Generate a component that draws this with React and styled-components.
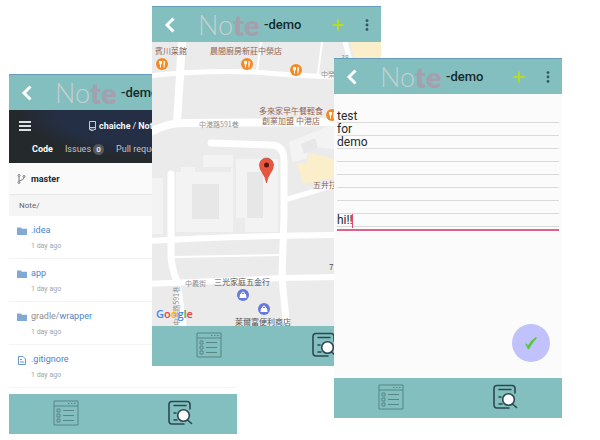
import React from "react";
import styled, { createGlobalStyle, css } from "styled-components";

const GlobalStyle = createGlobalStyle`
  * { box-sizing: border-box; }
  body { margin: 0; background: #ffffff; font-family: Roboto, "Noto Sans CJK TC", sans-serif; }
  button { margin: 0; padding: 0; border: 0; background: none; font: inherit; color: inherit; }
  a { color: inherit; text-decoration: none; }
  svg { display: block; }
  ul { list-style: none; margin: 0; padding: 0; }
`;

/* Three overlapping screens share one row of proportional columns. */
const Stage = styled.main`
  display: grid;
  grid-template-columns:
    minmax(0, 143fr) minmax(0, 85fr) minmax(0, 97fr)
    minmax(0, 47fr) minmax(0, 181fr) minmax(0, 38fr);
  align-items: start;
  padding-left: 9px;
`;

const Phone = styled.section`
  isolation: isolate;
  grid-row: 1;
  grid-column: ${(p) => p.$columns};
  margin-top: ${(p) => p.$top}px;
  min-height: 360px;
  display: flex;
  flex-direction: column;
  overflow: hidden;
  background: ${(p) => p.$background || "#ffffff"};
`;

const Bar = styled.header`
  flex: none;
  height: 36px;
  display: flex;
  align-items: center;
  padding-left: 12px;
  overflow: hidden;
  background: #82bfbe;
  border-top: 1px solid #659cbc;
`;

const IconButton = styled.button`
  flex: none;
  width: ${(p) => p.$width}px;
  height: 24px;
  display: flex;
  align-items: center;
  justify-content: center;
`;

const Brand = styled.h1`
  flex: 1;
  display: flex;
  align-items: center;
  gap: 4px;
  margin: 0 0 0 22px;
  line-height: 34px;
  white-space: nowrap;
`;

const Wordmark = styled.span`
  display: flex;
  width: 62px;
  color: #c6d0d0;
  font-family: Lato, sans-serif;
  font-size: 27px;
  font-weight: 300;
`;

const WordmarkHeavy = styled.span`
  color: #a5a0ae;
  font-family: Lato, sans-serif;
  font-size: 29px;
  font-weight: 800;
`;

const Suffix = styled.span`
  color: #142a2c;
  font-size: 13px;
  font-weight: 500;
`;

const TabBar = styled.nav`
  flex: none;
  height: 40px;
  display: grid;
  grid-template-columns: 1fr 1fr;
  background: #82bfbe;
`;

const Tab = styled.button`
  display: flex;
  align-items: center;
  justify-content: center;
  padding-bottom: 3px;
`;

function AppBar() {
  return (
    <Bar>
      <IconButton $width={12} aria-label="Back">
        <svg width="12" height="16" viewBox="0 0 12 16" fill="none" stroke="#fff" strokeWidth="3">
          <path d="M9.5 1.5 3 8l6.5 6.5" />
        </svg>
      </IconButton>
      <Brand>
        <Wordmark>
          No<WordmarkHeavy>te</WordmarkHeavy>
        </Wordmark>
        <Suffix>-demo</Suffix>
      </Brand>
      <IconButton $width={30} aria-label="Add">
        <svg width="12" height="12" viewBox="0 0 12 12" stroke="#b5dc24" strokeWidth="2">
          <path d="M6 .5v11M.5 6h11" />
        </svg>
      </IconButton>
      <IconButton $width={28} aria-label="More options">
        <svg width="4" height="12" viewBox="0 0 4 12" fill="#31585a">
          <circle cx="2" cy="1.6" r="1.4" />
          <circle cx="2" cy="6" r="1.4" />
          <circle cx="2" cy="10.4" r="1.4" />
        </svg>
      </IconButton>
    </Bar>
  );
}

function BottomTabs() {
  return (
    <TabBar>
      <Tab aria-label="List">
        <svg width="26" height="26" viewBox="0 0 26 26" fill="none" stroke="#578685">
          <path d="M1 1h24v24H1zM1 6h24" />
          <path d="M15 3.5h1.5M18 3.5h1.5M21 3.5h1.5" />
          <path d="M4 9h3v3H4zM4 14h3v3H4zM4 19h3v3H4zM10 10.5h11M10 15.5h11M10 20.5h11" />
        </svg>
      </Tab>
      <Tab aria-label="Search">
        <svg width="26" height="26" viewBox="0 0 26 26" fill="none" stroke="#2d4850" strokeWidth="1.6" strokeLinecap="round">
          <path d="M23 9V4.5Q23 1.500 20 1.500H5Q2 1.500 2 4.500v16Q2 24 5 24h12" />
          <path d="M7 5.5h12M7 13h2M7 20h3M20.5 20l4 3.5" />
          <circle cx="16.5" cy="15.5" r="5.8" fill="#fff" />
        </svg>
      </Tab>
    </TabBar>
  );
}

/* ---------- repository browser ---------- */

const RepoHead = styled.div`
  height: 53px;
  color: #f4f6f8;
  background: radial-gradient(ellipse 170px 60px at 65% 0, #242f45 0 60%, #24292c 82%);
  font-size: 9px;
  line-height: 12px;
  white-space: nowrap;
`;

const RepoTitle = styled.div`
  display: flex;
  align-items: center;
  height: 32px;
  padding: 0 10px;
  font-weight: 700;
`;

const RepoName = styled.span`
  display: flex;
  align-items: center;
  gap: 2px;
  margin-left: 57px;
`;

const Slash = styled.span`
  font-weight: 400;
`;

const RepoTabs = styled.div`
  display: flex;
  align-items: center;
  gap: 12px;
  padding: 1px 0 0 23px;
`;

const RepoTab = styled.a`
  display: flex;
  align-items: center;
  gap: 2px;
  color: #c0c4c8;
  ${(p) => p.$active && css`
    color: #ffffff;
    font-weight: 700;
  `}
`;

const Count = styled.span`
  width: 11px;
  height: 11px;
  border-radius: 6px;
  background: #54595f;
  color: #e4e6e8;
  font-size: 8px;
  font-weight: 700;
  line-height: 11px;
  text-align: center;
`;

const BranchRow = styled.div`
  display: flex;
  align-items: center;
  gap: 5px;
  height: 32px;
  padding-left: 8px;
  background: #fafafa;
  border-bottom: 1px solid #e8e8e8;
  color: #25292d;
  font-size: 9px;
  font-weight: 700;
`;

const PathRow = styled.div`
  height: 21px;
  padding-left: 10px;
  background: #f5f5f5;
  color: #606469;
  font-size: 8px;
  line-height: 21px;
`;

const FileItem = styled.li`
  display: grid;
  grid-template-columns: 10px 1fr;
  column-gap: 4px;
  height: 43px;
  padding: 8px 8px 0;
  border-bottom: 1px solid #f4f4f4;
`;

const FileText = styled.div`
  display: flex;
  flex-direction: column;
  gap: 4px;
`;

const FileLink = styled.a`
  color: #4a84c6;
  font-size: 9px;
  line-height: 13px;
`;

const Muted = styled.span`
  color: #8c8f93;
`;

const FileAge = styled.time`
  color: #a2a4a6;
  font-size: 7px;
  line-height: 11px;
`;

const Spacer = styled.div`
  flex: 1;
`;

const files = [
  { name: ".idea", folder: true },
  { name: "app", folder: true },
  { parent: "gradle/", name: "wrapper", folder: true },
  { name: ".gitignore", folder: false },
];

function FolderIcon() {
  return (
    <svg width="10" height="15" viewBox="0 0 10 15" fill="#82a9d4">
      <path d="M0 3.500h4l1 1.200h5V11H0z" />
    </svg>
  );
}

function FileIcon() {
  return (
    <svg width="10" height="15" viewBox="0 0 10 15" fill="none" stroke="#6b96cc">
      <path d="M1.500 3.500h4.500l2.500 2.500v5.500h-7zM3 6.500h2M3 9h4" />
    </svg>
  );
}

function RepoScreen() {
  return (
    <Phone $columns="1 / 3" $top={74}>
      <AppBar />
      <RepoHead>
        <RepoTitle>
          <IconButton $width={12} aria-label="Menu">
            <svg width="12" height="10" viewBox="0 0 12 10" stroke="#dde1e6" strokeWidth="2">
              <path d="M0 1h12M0 5h12M0 9h12" />
            </svg>
          </IconButton>
          <RepoName>
            <svg width="9" height="10" viewBox="0 0 9 10" fill="none" stroke="#c7ccd4">
              <path d="M3 8.500H1.500v-8h6v8H6M1.500 6.500h6M3 7.500V10l1-.8 1 .8V7.500" />
            </svg>
            <a href="#owner">chaiche</a> <Slash>/</Slash> <a href="#note">Note</a>
          </RepoName>
        </RepoTitle>
        <RepoTabs>
          <RepoTab href="#code" $active>Code</RepoTab>
          <RepoTab href="#issues">Issues <Count>0</Count></RepoTab>
          <RepoTab href="#pulls">Pull requests</RepoTab>
        </RepoTabs>
      </RepoHead>
      <BranchRow>
        <svg width="9" height="10" viewBox="0 0 9 10" fill="none" stroke="#777b80">
          <circle cx="2" cy="1.5" r="1" />
          <circle cx="2" cy="8.5" r="1" />
          <circle cx="7" cy="2.5" r="1" />
          <path d="M2 2.5v5M7 3.5Q7 6 2 7" />
        </svg>
        master
      </BranchRow>
      <PathRow>Note/</PathRow>
      <ul>
        {files.map((file) => (
          <FileItem key={file.name}>
            {file.folder ? <FolderIcon /> : <FileIcon />}
            <FileText>
              <FileLink href="#file">
                {file.parent && <Muted>{file.parent}</Muted>}
                {file.name}
              </FileLink>
              <FileAge>1 day ago</FileAge>
            </FileText>
          </FileItem>
        ))}
      </ul>
      <Spacer />
      <BottomTabs />
    </Phone>
  );
}

/* ---------- map ---------- */

const MapArea = styled.div`
  position: relative;
  flex: 1;
  min-height: 284px;
  overflow: hidden;
  background: #ebebeb;
`;

const MapDrawing = styled.svg`
  width: 100%;
  height: 284px;
`;

const tones = { food: "#8d6355", road: "#8f8f8f", shop: "#555555" };

const MapLabel = styled.span`
  position: absolute;
  left: ${(p) => p.$x}px;
  top: ${(p) => p.$y}px;
  color: ${(p) => tones[p.$tone]};
  font-family: "Noto Sans CJK TC", sans-serif;
  font-size: ${(p) => (p.$tone === "road" ? 7 : 8)}px;
  line-height: 10px;
  text-align: center;
  white-space: pre;
  ${(p) => p.$upward && css`
    writing-mode: vertical-rl;
    transform: rotate(180deg);
    text-orientation: sideways;
  `}
`;

const GoogleMark = styled.span`
  position: absolute;
  left: 4px;
  bottom: 4px;
  font-family: "Open Sans", sans-serif;
  font-size: 11px;
  font-weight: 600;
  line-height: 16px;
`;

const Tint = styled.span`
  color: ${(p) => p.$color};
`;

const labels = [
  { x: 3, y: 4, tone: "food", text: "賓川菜館" },
  { x: 58, y: 4, tone: "food", text: "晨間廚房新莊中榮店" },
  { x: 107, y: 64, tone: "food", text: "多來家早午餐輕食\n創業加盟 中港店" },
  { x: 161, y: 138, tone: "food", text: "五井拉麵" },
  { x: 47, y: 77, tone: "road", text: "中港路591巷" },
  { x: 169, y: 27, tone: "road", text: "中榮街" },
  { x: 189, y: 10, tone: "road", text: "38" },
  { x: 33, y: 236, tone: "road", text: "中義街" },
  { x: 19, y: 244, tone: "road", text: "中港路591巷", upward: true },
  { x: 177, y: 220, tone: "shop", text: "7" },
  { x: 62, y: 235, tone: "shop", text: "三光家庭五金行" },
  { x: 83, y: 275, tone: "shop", text: "萊爾富便利商店" },
];

const restaurants = [[10, 22], [95, 22], [144, 28], [180, 73]];
const shops = [[91, 253], [112, 267]];

const googleLetters = [
  ["G", "#4285f4"], ["o", "#ea4335"], ["o", "#fbbc05"],
  ["g", "#4285f4"], ["l", "#34a853"], ["e", "#ea4335"],
];

function MapScreen() {
  return (
    <Phone $columns="2 / 5" $top={6}>
      <AppBar />
      <MapArea>
        <MapDrawing viewBox="0 0 229 284" preserveAspectRatio="xMinYMin slice">
          <rect width="229" height="284" fill="#ebebeb" />
          <path fill="#fbefcb" d="M198 0h31v24l-27-9zM145 121l9 1 4-11 28 7v17l-35 7z" />
          <g fill="#f3f3f3">
            <path d="M24 130h55v-4h2v64H24zM84 117h42v73H93v-14h-9zM51 113h30v12H51zM29 130h14v-5h-14z" />
            <path d="M137 100l47-19v26l-26-2-4 12-14 3zM0 136h11v56H0z" />
          </g>
          <path fill="#e7e7e7" d="M40 142h27v35H40zM95 130h16v46H95zM149 102l14-6 3 10-14 6z" />
          <g fill="none" stroke="#fff" strokeLinecap="round" strokeLinejoin="round">
            <path strokeWidth="2" d="M109 0l-4 29M22 215l107-2M170 0l-4 32M48 0" />
            <path strokeWidth="8" d="M30-4l-2 38-3 46" />
            <path strokeWidth="5" d="M-4 34q55-6 106-4 44 4 84 5M192-4l9 34M136 157l50-15" />
            <path strokeWidth="8" d="M-4 91q20-10 34-10l156-1" />
            <path strokeWidth="7" d="M59 101l60 2q13 0 13 16v55l-2 62 5 52M19 132v80q0 12 6 28l7 50" />
            <path strokeWidth="6" d="M-4 199q90-5 190-6M-4 242l134-6 56-1" />
          </g>
          {restaurants.map(([x, y]) => (
            <g key={x} transform={`translate(${x} ${y})`}>
              <circle r="6" fill="#f28b25" />
              <path d="M-2.500-3v2.500q0 1 1 1v3M-.500-3v2.500q0 1-1 1M-1.500-3v3M2-3v6.500M2-3q1.500 1 0 4" fill="none" stroke="#fff" />
            </g>
          ))}
          {shops.map(([x, y]) => (
            <g key={x} transform={`translate(${x} ${y})`}>
              <circle r="6" fill="#6679db" />
              <path d="M-3-1h6l.5 4h-7z" fill="#fff" />
              <path d="M-1.500-1q0-2 1.500-2t1.500 2" fill="none" stroke="#fff" />
            </g>
          ))}
          <path fill="#e9553d" stroke="#b7432f" strokeWidth=".6" d="M114.500 141q-1-6-4-10-3-4-3-8a7 7 0 0 1 14 0q0 4-3 8-3 4-4 10z" />
          <circle cx="114.5" cy="123" r="2.5" fill="#5a1512" />
        </MapDrawing>
        {labels.map((label, i) => (
          <MapLabel key={i} $x={label.x} $y={label.y} $tone={label.tone} $upward={label.upward}>
            {label.text}
          </MapLabel>
        ))}
        <GoogleMark>
          {googleLetters.map(([letter, color], i) => (
            <Tint key={i} $color={color}>{letter}</Tint>
          ))}
        </GoogleMark>
      </MapArea>
      <BottomTabs />
    </Phone>
  );
}

/* ---------- note editor ---------- */

const Editor = styled.div`
  position: relative;
  margin: 16px 3px 0;
  border-bottom: 2px solid #e0628c;
`;

const NoteInput = styled.textarea`
  display: block;
  width: 100%;
  height: 119px;
  padding: 0;
  border: 0;
  outline: 0;
  resize: none;
  overflow: hidden;
  color: #26292b;
  background: repeating-linear-gradient(transparent 0 12px, #dadada 12px 13px) 0 0 / 100% 117px no-repeat;
  font-family: Roboto, sans-serif;
  font-size: 12px;
  line-height: 13px;
`;

const Caret = styled.span`
  position: absolute;
  left: 15px;
  bottom: 1px;
  width: 1px;
  height: 14px;
  background: #e0457c;
`;

const SaveButton = styled.button`
  display: flex;
  align-items: center;
  justify-content: center;
  width: 38px;
  height: 38px;
  margin: auto 12px 16px auto;
  border-radius: 50%;
  background: #c1c2fb;
`;

function NoteScreen() {
  return (
    <Phone $columns="4 / 6" $top={58} $background="#fbfbfb">
      <AppBar />
      <Editor>
        <NoteInput aria-label="Note text" spellCheck={false} defaultValue={"test\nfor\ndemo\n\n\n\n\n\nhi!!"} />
        <Caret />
      </Editor>
      <SaveButton aria-label="Save">
        <svg width="14" height="14" viewBox="0 0 14 14" fill="#54c936">
          <path d="M1 8q1.500-1.500 3 1.500Q7 4 12 1q1 0 .5 1.500Q8 7 5 13q-1 1-1.500-.5Q2.500 9 1 8z" />
        </svg>
      </SaveButton>
      <BottomTabs />
    </Phone>
  );
}

export default function App() {
  return (
    <>
      <GlobalStyle />
      <Stage>
        <RepoScreen />
        <MapScreen />
        <NoteScreen />
      </Stage>
    </>
  );
}
